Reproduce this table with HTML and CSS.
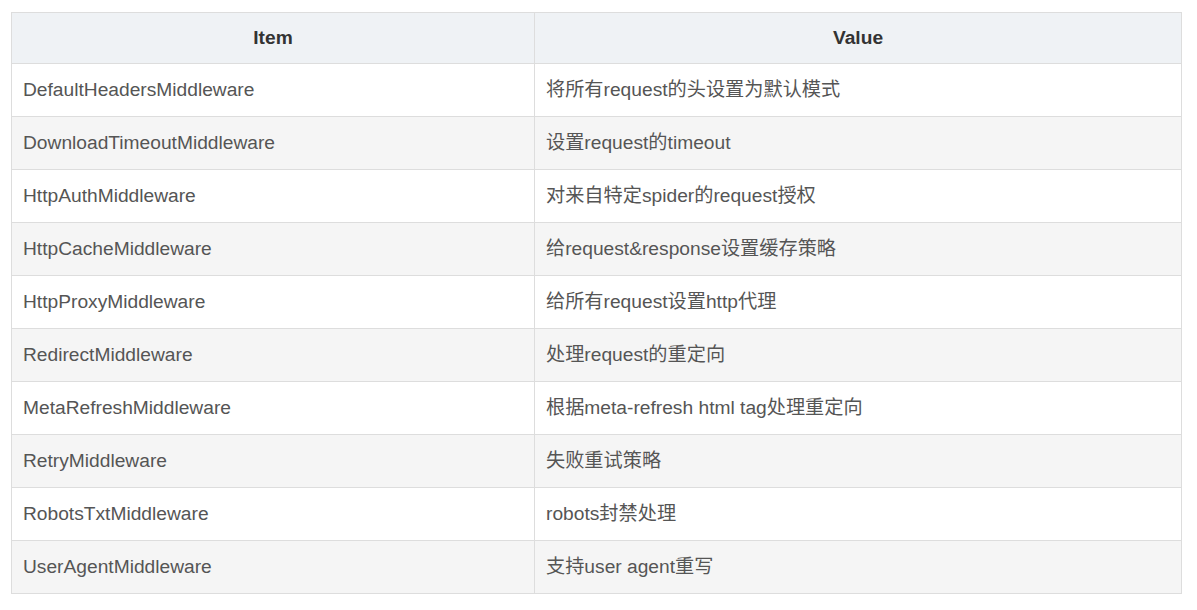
FILE: index.html
```html
<!DOCTYPE html>
<html>
<head>
<meta charset="utf-8">
<link rel="stylesheet" href="styles.css">
</head>
<body>
<table class="mw-table">
  <thead>
    <tr><th class="col-item">Item</th><th>Value</th></tr>
  </thead>
  <tbody>
    <tr><td>DefaultHeadersMiddleware</td><td>将所有request的头设置为默认模式</td></tr>
    <tr><td>DownloadTimeoutMiddleware</td><td>设置request的timeout</td></tr>
    <tr><td>HttpAuthMiddleware</td><td>对来自特定spider的request授权</td></tr>
    <tr><td>HttpCacheMiddleware</td><td>给request&amp;response设置缓存策略</td></tr>
    <tr><td>HttpProxyMiddleware</td><td>给所有request设置http代理</td></tr>
    <tr><td>RedirectMiddleware</td><td>处理request的重定向</td></tr>
    <tr><td>MetaRefreshMiddleware</td><td>根据meta-refresh html tag处理重定向</td></tr>
    <tr><td>RetryMiddleware</td><td>失败重试策略</td></tr>
    <tr><td>RobotsTxtMiddleware</td><td>robots封禁处理</td></tr>
    <tr><td>UserAgentMiddleware</td><td>支持user agent重写</td></tr>
  </tbody>
</table>
</body>
</html>
```
FILE: styles.css
```css
html, body {
  margin: 0;
  padding: 0;
  background: #ffffff;
}
body {
  padding: 12px 15px 0 11px;
  font-family: "Liberation Sans", Arial, "Noto Sans CJK SC", sans-serif;
}
.mw-table {
  width: 1171px;
  border-collapse: collapse;
  font-size: 19.2px;
  line-height: 24px;
  color: #555555;
}
.mw-table th,
.mw-table td {
  border: 1px solid #dddddd;
  height: 53px;
  box-sizing: border-box;
  padding: 0 11px;
  text-align: left;
  vertical-align: middle;
}
.mw-table th {
  background: #eff2f5;
  color: #333333;
  font-weight: bold;
  text-align: center;
  height: 51px;
}
.mw-table .col-item {
  width: 523px;
}
.mw-table tbody tr:nth-child(even) td {
  background: #f5f5f5;
}
```
